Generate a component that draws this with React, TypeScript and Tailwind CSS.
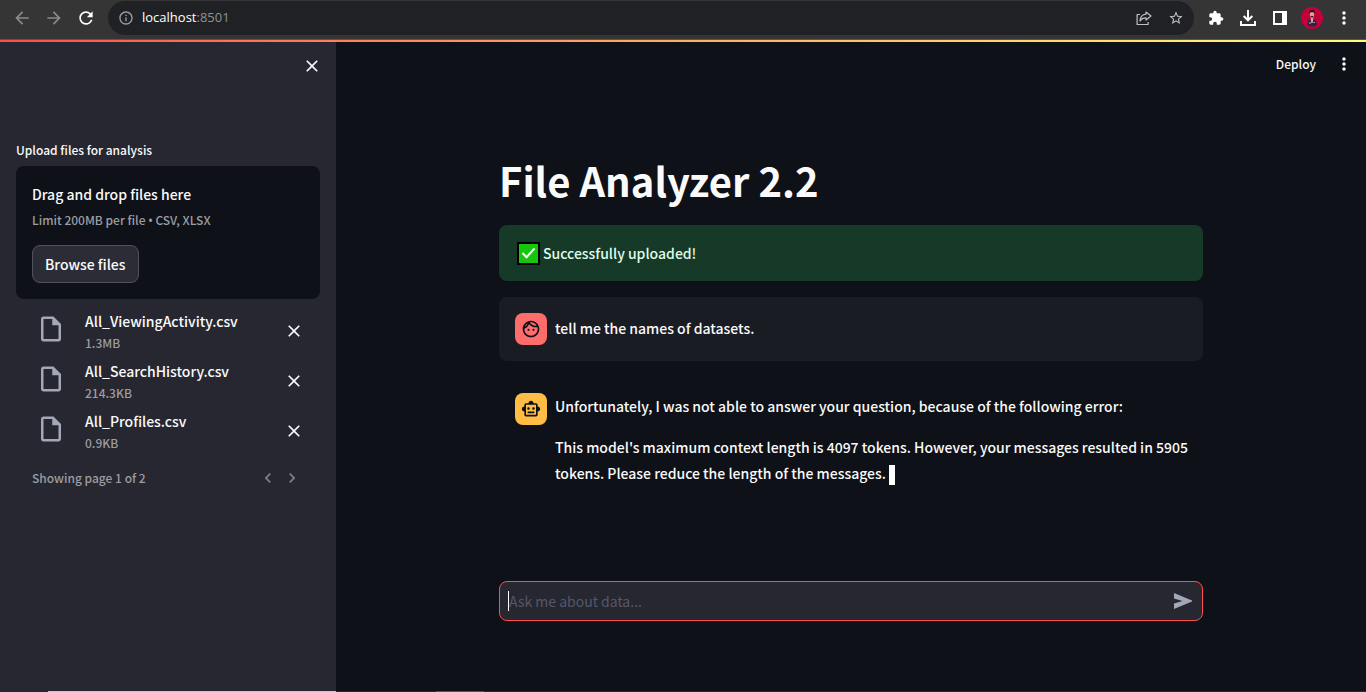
import {
  MdArrowBack,
  MdArrowForward,
  MdChevronLeft,
  MdChevronRight,
  MdClose,
  MdExtension,
  MdInfoOutline,
  MdMoreVert,
  MdOutlineFace,
  MdOutlineInsertDriveFile,
  MdOutlineSmartToy,
  MdRefresh,
  MdStarBorder,
} from "react-icons/md";

const files = [
  { name: "All_ViewingActivity.csv", size: "1.3MB" },
  { name: "All_SearchHistory.csv", size: "214.3KB" },
  { name: "All_Profiles.csv", size: "0.9KB" },
];

function ShareIcon() {
  return (
    <svg viewBox="0 0 16 16" className="size-4" fill="none" stroke="currentColor" strokeWidth="1.2" strokeLinejoin="round">
      <path d="M4 4.500H1.100v10h11V12" />
      <path d="M10 2l5 4-5 4V7.800C7 7.800 5.300 8.800 4 11c.2-4 2.300-6.500 6-6.900z" />
    </svg>
  );
}

function DownloadIcon() {
  return (
    <svg viewBox="0 0 16 16" className="size-4" fill="none" stroke="currentColor" strokeWidth="2">
      <path d="M8 0v10M3.700 6L8 10.300 12.300 6" />
      <path d="M1 11v4h14v-4" />
    </svg>
  );
}

function SidePanelIcon() {
  return (
    <svg viewBox="0 0 14 14" className="size-3.5">
      <path fill="currentColor" fillRule="evenodd" d="M0 0h14v14H0zM2 2v10h7V2z" />
    </svg>
  );
}

function SendIcon() {
  return (
    <svg viewBox="0 0 18 16" className="h-4 w-[18px]">
      <path fill="currentColor" d="M0 0l18 7.500v1L0 16v-5.500L8.500 8 0 5.500z" />
    </svg>
  );
}

function Avatar() {
  return (
    <svg viewBox="0 0 22 22" className="size-[22px]">
      <circle cx="11" cy="11" r="11" fill="#c4003a" />
      <path d="M6.300 18.500c-.3-5 1-6.500 4.700-6.500s5 1.500 4.700 6.500c-3 1.500-6.400 1.500-9.400 0z" fill="#3a1f4d" />
      <path d="M9.700 10h2.600v2.500L11 14l-1.300-1.500z" fill="#d99a7c" />
      <path d="M10 12.500l1 1 1-1-.6 3.500h-.8z" fill="#f3dfe6" />
      <ellipse cx="11" cy="7.500" rx="2.200" ry="3" fill="#e0a386" />
      <path d="M8.500 7C8 4 9.200 2.800 11.200 2.800S14 4.200 13.500 7l-.8-1.700H9.500z" fill="#24152e" />
      <path d="M9.300 8.500c.8 2.600 2.600 2.600 3.400 0L12 9h-2z" fill="#24152e" />
      <path d="M8 16h2.200M12.500 15.500H14" stroke="#e0a386" strokeWidth="1.2" />
    </svg>
  );
}

function CheckEmoji() {
  return (
    <svg viewBox="0 0 23 23" className="size-[23px] shrink-0" role="img" aria-label="Success">
      <path fill="#000" d="M0 0h23v23H0z" />
      <path fill="#16c60c" d="M2 2h19v19H2z" />
      <path d="M5.500 11l4 4.200 8-8.700" fill="none" stroke="#fff" strokeWidth="2" />
    </svg>
  );
}

function BrowserBar() {
  return (
    <header className="flex h-10 items-start border-b border-[#55565a] bg-[#353535] pr-1.5 text-white">
      <div className="flex h-9 items-center gap-3 px-3 text-[#8a8a8a]">
        <button aria-label="Back"><MdArrowBack size={20} /></button>
        <button aria-label="Forward"><MdArrowForward size={20} /></button>
        <button aria-label="Reload" className="text-white"><MdRefresh size={20} /></button>
      </div>
      <div className="mt-px flex h-[34px] flex-1 items-center rounded-full bg-[#202124] px-2.5">
        <MdInfoOutline size={16} className="text-[#9aa0a6]" />
        <a href="#" className="ml-2 flex-1 font-['Open_Sans',sans-serif] text-[13px] font-normal text-white">
          localhost<span className="text-[#8f9296]">:8501</span>
        </a>
        <div className="flex items-center gap-4 text-[#bdc1c6]">
          <button aria-label="Share"><ShareIcon /></button>
          <button aria-label="Bookmark"><MdStarBorder size={16} /></button>
        </div>
      </div>
      <div className="flex h-9 items-center pl-1.5">
        <button aria-label="Extensions" className="grid size-8 place-items-center"><MdExtension size={16} /></button>
        <button aria-label="Downloads" className="grid size-8 place-items-center"><DownloadIcon /></button>
        <button aria-label="Side panel" className="grid size-8 place-items-center"><SidePanelIcon /></button>
        <button aria-label="Profile" className="grid size-8 place-items-center"><Avatar /></button>
        <button aria-label="Browser menu" className="grid size-8 place-items-center"><MdMoreVert size={20} /></button>
      </div>
    </header>
  );
}

function Sidebar() {
  return (
    <aside className="w-[336px] shrink-0 bg-[#262730] px-4 pt-3.5">
      <div className="-mr-0.5 flex justify-end">
        <button aria-label="Close sidebar"><MdClose size={20} /></button>
      </div>
      <label htmlFor="browse" className="mt-16 block text-[12px] leading-5">Upload files for analysis</label>
      <section className="mt-1.5 rounded-lg bg-[#0e1117] p-4">
        <p className="text-[14px] leading-6">Drag and drop files here</p>
        <p className="mt-1 text-[12px] leading-5 text-[#9c9da0]">
          Limit 200MB per file <span className="font-['Noto_Sans',sans-serif]">•</span> CSV, XLSX
        </p>
        <button id="browse" className="mt-3.5 h-[38px] rounded-lg border border-[#515259] bg-[#2b2c36] px-3 text-[14px]">
          Browse files
        </button>
      </section>
      <ul className="pt-[7px]">
        {files.map((file) => (
          <li key={file.name} className="flex h-[50px] items-center pr-4 pl-5">
            <div className="flex flex-1 items-center gap-[19px] pb-1">
              <MdOutlineInsertDriveFile size={30} className="text-[#a3a8b8]" />
              <div className="pt-1">
                <p className="text-[14px] leading-6">{file.name}</p>
                <p className="text-[12px] leading-5 text-[#9c9da0]">{file.size}</p>
              </div>
            </div>
            <button aria-label={"Remove " + file.name}><MdClose size={20} /></button>
          </li>
        ))}
      </ul>
      <div className="mt-3 flex items-center pr-[18px] pl-4 text-[#9c9da0]">
        <span className="flex-1 text-[12px] leading-5">Showing page 1 of 2</span>
        <button aria-label="Previous page" className="mr-1 text-[#808187]"><MdChevronLeft size={20} /></button>
        <button aria-label="Next page" className="text-[#808187]"><MdChevronRight size={20} /></button>
      </div>
    </aside>
  );
}

function Main() {
  return (
    <main className="flex min-w-0 flex-1 flex-col bg-[#0e1117]">
      <div className="flex h-11 items-center justify-end gap-[18px] pr-3">
        <button className="text-[12px]">Deploy</button>
        <button aria-label="App menu"><MdMoreVert size={20} /></button>
      </div>
      <div className="mx-auto flex w-full max-w-[704px] flex-1 flex-col">
        <h1 className="mt-[68px] text-[40px] leading-[53px] font-bold">File Analyzer 2.2</h1>
        <div className="mt-[18px] flex h-14 items-center gap-[3px] rounded-lg bg-[#173928] px-[18px] text-[14px] text-[#dffde9]">
          <CheckEmoji />
          Successfully uploaded!
        </div>
        <div className="mt-4 flex gap-2 rounded-lg bg-[#1a1c24] p-4">
          <span className="flex size-8 items-center justify-center rounded-lg bg-[#ff6c6c] text-[#0e1117]">
            <MdOutlineFace size={20} />
          </span>
          <p className="text-[14px] leading-[30px]">tell me the names of datasets.</p>
        </div>
        <div className="mt-4 flex gap-2 py-4 pr-2 pl-4">
          <span className="flex size-8 shrink-0 items-center justify-center rounded-lg bg-[#ffbd45] text-[#0e1117]">
            <MdOutlineSmartToy size={20} />
          </span>
          <div className="flex flex-col gap-[15px] text-[14px] leading-[26px]">
            <p>Unfortunately, I was not able to answer your question, because of the following error:</p>
            <p>
              This model's maximum context length is 4097 tokens. However, your messages resulted in 5905 tokens. Please
              reduce the length of the messages.{" "}
              <span className="inline-block h-5 w-1.5 bg-white align-middle" />
            </p>
          </div>
        </div>
        <form className="mt-auto mb-[70px] flex h-10 items-center rounded-lg border border-[#ff4b4b] bg-[#262730] pr-2.5 pl-2">
          <span className="h-5 w-px bg-white" />
          <input
            aria-label="Ask me about data"
            placeholder="Ask me about data..."
            className="h-6 min-w-0 flex-1 bg-transparent text-[14px] font-normal outline-none placeholder:text-[#555867]"
          />
          <button aria-label="Send" type="button" className="text-[#a3a8b8]"><SendIcon /></button>
        </form>
      </div>
    </main>
  );
}

export default function App() {
  return (
    <div className="flex min-h-screen flex-col bg-[#0e1117] font-['Noto_Sans_CJK_SC',sans-serif] font-medium text-[#fafafa]">
      <BrowserBar />
      <div className="h-0.5 bg-linear-to-r from-[#ff4b4b] to-[#fffd80]" />
      <div className="flex flex-1">
        <Sidebar />
        <Main />
      </div>
      <div className="flex h-px bg-[#2a2a2b]">
        <div className="ml-12 w-72 bg-[#c8c8c8]" />
        <div className="ml-[100px] w-12 bg-[#505258]" />
      </div>
    </div>
  );
}
